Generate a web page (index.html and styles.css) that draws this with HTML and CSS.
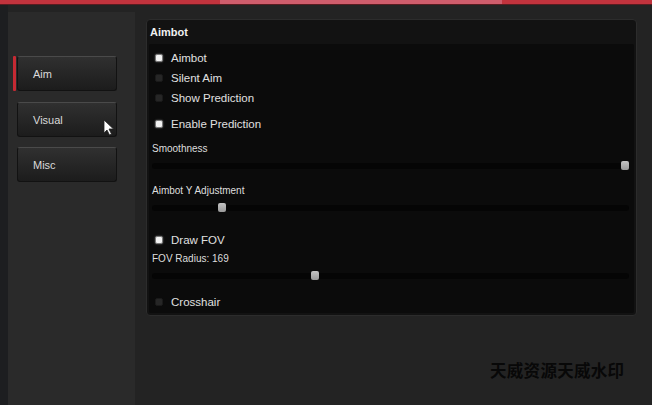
FILE: index.html
```html
<!DOCTYPE html>
<html>
<head>
<meta charset="utf-8">
<link rel="stylesheet" href="styles.css">
</head>
<body>
<div class="topbar"><div class="topbar-hi"></div></div>
<div class="shell">
  <div class="gutter"></div>
  <nav class="sidebar">
    <div class="tab active"><span class="marker"></span><div class="btn">Aim</div></div>
    <div class="tab"><div class="btn">Visual<svg class="cursor" width="12" height="17" viewBox="0 0 12 17"><path d="M1 1 L1 14 L4 11 L6.5 16 L8.5 15 L6 10 L10.5 10 Z" fill="#fff" stroke="#222" stroke-width="0.8"/></svg></div></div>
    <div class="tab"><div class="btn">Misc</div></div>
  </nav>
  <main class="main">
    <section class="panel">
      <div class="panel-title">Aimbot</div>
      <div class="panel-body">
        <div class="check on r1"><span class="box"></span>Aimbot</div>
        <div class="check"><span class="box"></span>Silent Aim</div>
        <div class="check"><span class="box"></span>Show Prediction</div>
        <div class="check on r-gap"><span class="box"></span>Enable Prediction</div>
        <div class="label l-gap">Smoothness</div>
        <div class="slider"><div class="track"></div><span class="knob" style="left:472px"></span></div>
        <div class="label l-gap2">Aimbot Y Adjustment</div>
        <div class="slider"><div class="track"></div><span class="knob" style="left:69px"></span></div>
        <div class="check on r-gap3"><span class="box"></span>Draw FOV</div>
        <div class="label">FOV Radius: 169</div>
        <div class="slider"><div class="track"></div><span class="knob" style="left:162px"></span></div>
        <div class="check r-gap4"><span class="box"></span>Crosshair</div>
      </div>
    </section>
    <div class="watermark">天威资源天威水印</div>
  </main>
</div>
</body>
</html>
```

FILE: styles.css
```css
html, body {
  margin: 0;
  padding: 0;
  width: 652px;
  height: 405px;
  overflow: hidden;
  background: #232323;
  font-family: "Liberation Sans", Arial, sans-serif;
  color: #e2e2e2;
}
.topbar {
  height: 4px;
  background: #c2333d;
  border-bottom: 1px solid #5a1c20;
  position: relative;
}
.topbar-hi {
  margin-left: 220px;
  width: 282px;
  height: 4px;
  background: #cf5d6c;
}
.shell {
  display: flex;
  height: 400px;
}
.gutter {
  width: 8px;
  background: #1d1e20;
}
.sidebar {
  width: 127px;
  margin-top: 7px;
  background: #2a2a2a;
  display: flex;
  flex-direction: column;
  padding-top: 44px;
  box-sizing: border-box;
}
.tab {
  display: flex;
  align-items: stretch;
  padding-left: 9px;
  height: 35px;
  margin-bottom: 11px;
}
.tab:nth-child(3) { margin-top: -1px; }
.marker {
  width: 3px;
  margin-left: -4px;
  margin-right: 1px;
  background: #c52a33;
  border-radius: 1px;
}
.btn {
  position: relative;
  width: 100px;
  box-sizing: border-box;
  border: 1px solid #121212;
  border-top-color: #4a4a4a;
  border-radius: 3px;
  background: linear-gradient(#303030, #1c1c1c);
  font-size: 11px;
  color: #dadada;
  padding-left: 15px;
  display: flex;
  align-items: center;
}
.cursor {
  position: absolute;
  left: 85px;
  top: 16px;
}
.main {
  flex: 1;
  padding-left: 11px;
  padding-top: 14px;
  position: relative;
}
.panel {
  width: 491px;
  height: 297px;
  box-sizing: border-box;
  background: #121212;
  border: 1px solid #2c2c2c;
  border-radius: 4px;
  display: flex;
  flex-direction: column;
}
.panel-title {
  height: 24px;
  font-size: 11px;
  font-weight: bold;
  color: #f0f0f0;
  padding-left: 3px;
  padding-top: 6px;
  box-sizing: border-box;
}
.panel-body {
  margin: 0 2px 2px 2px;
  flex: 1;
  background: #0b0b0b;
  border-radius: 2px;
  display: flex;
  flex-direction: column;
  padding-top: 4px;
}
.check {
  height: 20px;
  display: flex;
  align-items: center;
  font-size: 11.5px;
  color: #e0e0e0;
  padding-left: 6px;
}
.box {
  width: 6px;
  height: 6px;
  border-radius: 2px;
  background: #262626;
  border: 1px solid #1a1a1a;
  margin-right: 8px;
}
.check.on .box {
  background: #f2f2f2;
  border-color: #777;
  box-shadow: 0 0 2px #666;
}
.r-gap { margin-top: 6px; }
.label {
  height: 16px;
  display: flex;
  align-items: center;
  font-size: 10px;
  color: #dedede;
  padding-left: 3px;
}
.l-gap { margin-top: 6px; }
.l-gap2 { margin-top: 7px; }
.slider {
  height: 18px;
  position: relative;
  margin-top: 1px;
}
.track {
  position: absolute;
  left: 3px;
  right: 5px;
  top: 6px;
  height: 6px;
  background: #050505;
  border-radius: 3px;
}
.knob {
  position: absolute;
  top: 4px;
  width: 8px;
  height: 9px;
  border-radius: 2px;
  background: linear-gradient(#c4c4c4, #999);
}
.r-gap3 { margin-top: 13px; }
.r-gap4 { margin-top: 7px; }
.watermark {
  position: absolute;
  left: 355px;
  top: 353px;
  font-family: "Noto Sans CJK SC", sans-serif;
  font-weight: bold;
  font-size: 16.5px;
  letter-spacing: 0.3px;
  color: #080808;
}
```
